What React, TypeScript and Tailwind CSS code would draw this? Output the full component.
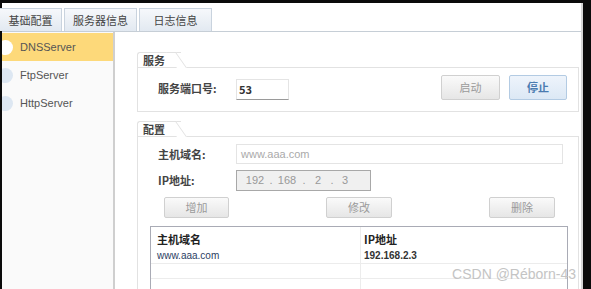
import React from "react";

const cjk = { fontFamily: '"Noto Sans CJK SC", "Liberation Sans", sans-serif' };

const servers = [
  { name: "DNSServer", active: true },
  { name: "FtpServer", active: false },
  { name: "HttpServer", active: false },
];

function GroupTitle({ label }: { label: string }) {
  return (
    <div className="relative h-[15px] w-[44px] border-t border-l border-[#e2e2e2] rounded-tl-[3px] bg-white">
      <span className="absolute left-[5px] top-[0px] text-[11px] leading-[14px] font-bold text-[#444]" style={cjk}>
        {label}
      </span>
      <div className="absolute right-[-6px] top-[-1px] h-[16px] w-[10px] border-t border-r border-[#e2e2e2] bg-white skew-x-[35deg] origin-bottom-left" />
    </div>
  );
}

function GrayButton({ label, className }: { label: string; className: string }) {
  return (
    <button
      className={`flex items-center justify-center rounded-[2px] border border-[#d0d0d0] bg-gradient-to-b from-[#fafafa] to-[#e6e6e6] text-[11px] text-[#9a9a9a] ${className}`}
      style={cjk}
    >
      {label}
    </button>
  );
}

export default function App() {
  return (
    <div className="relative w-[591px] h-[289px] overflow-hidden bg-[#0b0b0b] pt-[3px] pl-[2px] pr-[8px]">
      <div className="flex h-[300px] flex-col bg-white border-r-2 border-[#d6d6d6]">
        {/* tabs */}
        <div className="flex h-[29px] shrink-0 items-end gap-[2px] border-b border-[#c6ced6]">
          {["基础配置", "服务器信息", "日志信息"].map((t, i) => (
            <div
              key={t}
              className={`flex h-[23px] items-center justify-center border border-b-0 border-[#c9d3de] bg-gradient-to-b from-[#f6f8fb] to-[#e2e9f1] text-[11px] text-[#444] ${
                i === 0 ? "w-[62px] -ml-[2px] border-l-0" : "w-[73px]"
              }`}
              style={cjk}
            >
              {t}
            </div>
          ))}
        </div>

        <div className="flex flex-1">
          {/* sidebar */}
          <div className="w-[113px] shrink-0 bg-[#fafafa] border-r-2 border-[#cfcfcf] pt-[1px]">
            {servers.map((s) => (
              <div
                key={s.name}
                className={`flex h-[28px] items-center overflow-hidden ${s.active ? "bg-[#fdd97a]" : ""}`}
              >
                <div
                  className={`-ml-[4px] h-[15px] w-[15px] shrink-0 rounded-full ${s.active ? "bg-white" : "bg-[#dde7f2]"}`}
                />
                <span className="ml-[7px] text-[11px] text-[#555]" style={{ fontFamily: '"Liberation Sans", sans-serif' }}>
                  {s.name}
                </span>
              </div>
            ))}
          </div>

          {/* content */}
          <div className="flex-1 pl-[22px] pr-[2px] pt-[20px]">
            {/* 服务 */}
            <GroupTitle label="服务" />
            <div className="flex items-end border border-[#e2e2e2] pl-[20px] pr-[11px] pt-[7px] pb-[11px]">
              <span className="mb-[4px] w-[78px] text-[11px] font-bold text-[#444]" style={cjk}>
                服务端口号:
              </span>
              <div className="flex h-[21px] w-[53px] items-center border border-[#e4e4e4] border-b-[#9a9a9a] pl-[2px] text-[11px] font-semibold text-[#333]" style={cjk}>
                53
              </div>
              <div className="flex-1" />
              <GrayButton label="启动" className="h-[25px] w-[59px]" />
              <button
                className="ml-[9px] flex h-[25px] w-[58px] items-center justify-center rounded-[2px] border border-[#b3cbe3] bg-gradient-to-b from-[#eef4fb] to-[#dce8f5] text-[11px] font-bold text-[#4a7bb0]"
                style={cjk}
              >
                停止
              </button>
            </div>

            {/* 配置 */}
            <div className="mt-[9px]">
              <GroupTitle label="配置" />
              <div className="border border-[#e2e2e2] pl-[12px] pr-[10px] pt-[7px] h-[200px]">
                <div className="flex items-center">
                  <span className="ml-[8px] w-[78px] text-[11px] font-bold text-[#444]" style={cjk}>
                    主机域名:
                  </span>
                  <div className="flex h-[20px] w-[327px] items-center border border-[#e4e4e4] pl-[4px] text-[11px] text-[#aaa]" style={{ fontFamily: '"Liberation Sans", sans-serif' }}>
                    www.aaa.com
                  </div>
                </div>
                <div className="mt-[6px] flex items-center">
                  <span className="ml-[8px] w-[78px] text-[11px] font-bold text-[#444]" style={cjk}>
                    IP地址:
                  </span>
                  <div className="flex h-[21px] w-[135px] items-center border border-[#a8a8a8] bg-[#f0f0f0] pl-[6px] text-[11px] text-[#999]" style={{ fontFamily: '"Liberation Sans", sans-serif' }}>
                    <span className="w-[24px] text-center">192</span>
                    <span className="w-[8px] text-center">.</span>
                    <span className="w-[24px] text-center">168</span>
                    <span className="w-[10px] text-center">.</span>
                    <span className="w-[18px] text-center">2</span>
                    <span className="w-[10px] text-center">.</span>
                    <span className="w-[16px] text-center">3</span>
                  </div>
                </div>
                <div className="mt-[6px] flex gap-[97px] pl-[14px]">
                  <GrayButton label="增加" className="h-[21px] w-[65px]" />
                  <GrayButton label="修改" className="h-[21px] w-[66px]" />
                  <GrayButton label="删除" className="h-[21px] w-[66px]" />
                </div>

                {/* table */}
                <div className="mt-[8px] w-[418px] border border-[#a9abb5] text-[11px]">
                  <div className="flex h-[21px] items-center">
                    <div className="w-[209px] pl-[6px] pt-[3px] font-bold text-[#222]" style={cjk}>
                      主机域名
                    </div>
                    <div className="h-full border-l border-[#ececec] pl-[3px] pt-[4px] font-bold text-[#222]" style={cjk}>
                      IP地址
                    </div>
                  </div>
                  <div className="flex h-[16px] items-center border-b border-[#ececec]">
                    <div className="w-[209px] pl-[6px] text-[10px] text-[#2c3e63]" style={{ fontFamily: '"Liberation Sans", sans-serif' }}>
                      www.aaa.com
                    </div>
                    <div className="h-full border-l border-[#ececec] pl-[3px] text-[10px] font-bold text-[#333]" style={{ fontFamily: '"Liberation Sans", sans-serif' }}>
                      192.168.2.3
                    </div>
                  </div>
                  {[0, 1].map((r) => (
                    <div key={r} className="flex h-[15px] border-b border-[#ececec]">
                      <div className="w-[209px]" />
                      <div className="h-full border-l border-[#ececec]" />
                    </div>
                  ))}
                </div>
              </div>
            </div>
          </div>
        </div>
      </div>

      <span
        className="absolute bottom-[4px] right-[15px] text-[14px] text-[#c4c4c4]"
        style={{ fontFamily: '"Liberation Sans", sans-serif' }}
      >
        CSDN @Réborn-43
      </span>
    </div>
  );
}
